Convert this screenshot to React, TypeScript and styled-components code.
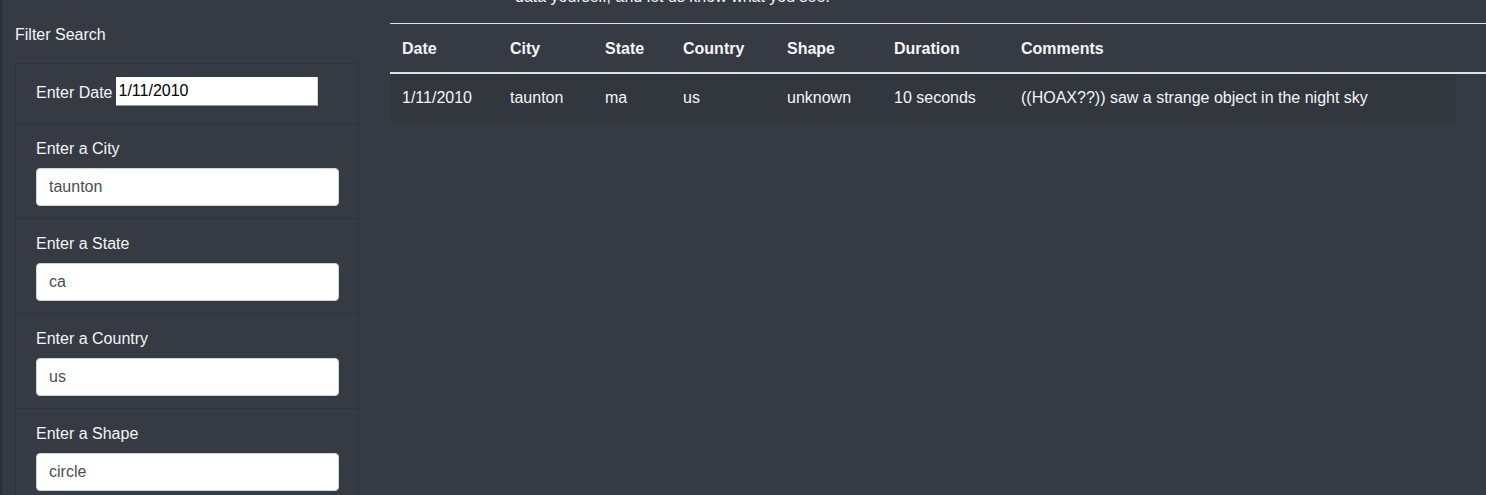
import React from "react";
import styled, { createGlobalStyle } from "styled-components";

//styled-components//

const GlobalStyle = createGlobalStyle`
  html, body {
    margin: 0;
    padding: 0;
    background: #363a42;
    overflow: hidden;
  }
  body {
    font-family: "Liberation Sans", Arial, Helvetica, sans-serif;
    font-size: 16px;
    line-height: 24px;
    color: #f4f5f7;
  }
`;

const Page = styled.div`
  height: 495px;
  display: flex;
  gap: 31px;
  padding-left: 15px;
  box-shadow: inset 3px 0 0 #2d3137;
  box-sizing: border-box;
`;

const Sidebar = styled.aside`
  width: 344px;
  flex-shrink: 0;
  padding-top: 23px;
`;

const SideTitle = styled.h2`
  margin: 0 0 16px;
  font-size: 16px;
  font-weight: 400;
  line-height: 24px;
`;

const FilterList = styled.ul`
  list-style: none;
  margin: 0;
  padding: 0;
  border: 1px solid #2f3339;
  border-radius: 4px;
`;

const FilterItem = styled.li<{ $inline?: boolean }>`
  padding: ${(p) => (p.$inline ? "12px 20px 17px" : "13px 20px 12px")};
  border-top: 1px solid #2f3339;
  display: ${(p) => (p.$inline ? "flex" : "block")};
  align-items: center;
  gap: 4px;

  &:first-child {
    border-top: none;
  }
`;

const FilterLabel = styled.label`
  display: block;
  margin-bottom: 7px;
`;

const InlineLabel = styled.label`
  padding-top: 3px;
`;

const PlainInput = styled.input`
  width: 202px;
  height: 29px;
  box-sizing: border-box;
  border: none;
  border-bottom: 1px solid #9a9a9a;
  border-right: 1px solid #d8d8d8;
  padding: 0 2px;
  margin-top: 1px;
  font-family: "Liberation Sans", Arial, sans-serif;
  font-size: 16px;
  color: #000;
  background: #fff;
  outline: none;
`;

const FormInput = styled.input`
  display: block;
  width: 303px;
  height: 38px;
  box-sizing: border-box;
  padding: 6px 12px;
  border: 1px solid #ced4da;
  border-radius: 4px;
  background: #fff;
  font-family: "Liberation Sans", Arial, sans-serif;
  font-size: 16px;
  color: #495057;
  outline: none;
`;

const Main = styled.main`
  flex: 1;
  min-width: 0;
`;

const Intro = styled.p`
  margin: -15px 0 14px 125px;
  line-height: 24px;
  font-size: 16px;
`;

const Table = styled.table`
  width: 100%;
  border-collapse: collapse;
  table-layout: fixed;
`;

const HeadCell = styled.th<{ $w?: number }>`
  box-sizing: border-box;
  width: ${(p) => (p.$w ? `${p.$w}px` : "auto")};
  text-align: left;
  font-weight: 700;
  padding: 13px 12px 11px;
  line-height: 24px;
  border-top: 1px solid #dee2e6;
  border-bottom: 2px solid #dee2e6;
`;

const Row = styled.tr`
  background: linear-gradient(to right, #32363d calc(100% - 30px), transparent 0);
`;

const Cell = styled.td`
  padding: 12px;
  line-height: 24px;
  white-space: nowrap;
`;

////////////////////
interface Sighting {
  datetime: string;
  city: string;
  state: string;
  country: string;
  shape: string;
  durationMinutes: string;
  comments: string;
}

const columns = [
  { label: "Date", width: 108 },
  { label: "City", width: 95 },
  { label: "State", width: 78 },
  { label: "Country", width: 104 },
  { label: "Shape", width: 107 },
  { label: "Duration", width: 127 },
  { label: "Comments", width: 0 },
];

const data: Sighting[] = [
  {
    datetime: "1/11/2010",
    city: "taunton",
    state: "ma",
    country: "us",
    shape: "unknown",
    durationMinutes: "10 seconds",
    comments: "((HOAX??)) saw a strange object in the night sky",
  },
];

const filters = [
  { id: "city", label: "Enter a City", value: "taunton" },
  { id: "state", label: "Enter a State", value: "ca" },
  { id: "country", label: "Enter a Country", value: "us" },
  { id: "shape", label: "Enter a Shape", value: "circle" },
];

const App = () => {
  return (
    <>
      <GlobalStyle />
      <Page>
        <Sidebar>
          <SideTitle>Filter Search</SideTitle>
          <FilterList>
            <FilterItem $inline>
              <InlineLabel htmlFor="datetime">Enter Date</InlineLabel>
              <PlainInput id="datetime" type="text" defaultValue="1/11/2010" />
            </FilterItem>
            {filters.map((f) => (
              <FilterItem key={f.id}>
                <FilterLabel htmlFor={f.id}>{f.label}</FilterLabel>
                <FormInput id={f.id} type="text" defaultValue={f.value} />
              </FilterItem>
            ))}
          </FilterList>
        </Sidebar>
        <Main>
          <Intro>data yourself, and let us know what you see.</Intro>
          <Table>
            <thead>
              <tr>
                {columns.map((c) => (
                  <HeadCell key={c.label} $w={c.width || undefined}>
                    {c.label}
                  </HeadCell>
                ))}
              </tr>
            </thead>
            <tbody>
              {data.map((s, index) => (
                <Row key={index}>
                  <Cell>{s.datetime}</Cell>
                  <Cell>{s.city}</Cell>
                  <Cell>{s.state}</Cell>
                  <Cell>{s.country}</Cell>
                  <Cell>{s.shape}</Cell>
                  <Cell>{s.durationMinutes}</Cell>
                  <Cell>{s.comments}</Cell>
                </Row>
              ))}
            </tbody>
          </Table>
        </Main>
      </Page>
    </>
  );
};

export default App;
